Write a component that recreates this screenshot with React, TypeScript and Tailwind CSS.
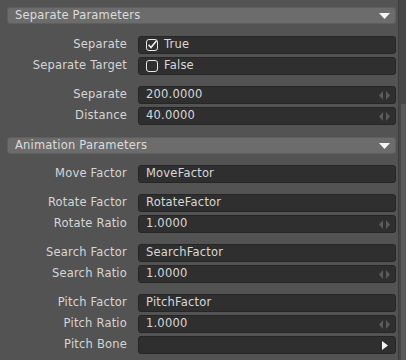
import React from 'react';

type Row =
  | { kind: 'check'; label: string; value: boolean }
  | { kind: 'number'; label: string; value: string }
  | { kind: 'text'; label: string; value: string }
  | { kind: 'object'; label: string };

const Header: React.FC<{ title: string }> = ({ title }) => (
  <div className="ml-[7px] mr-[2px] h-[17px] rounded-[3px] border border-[#5e5e5e] bg-[#6c6c6c] flex items-center justify-between pl-[7px] pr-[5px]">
    <span className="text-[#dcdcdc] leading-none">{title}</span>
    <svg width="11" height="6" viewBox="0 0 11 6">
      <polygon points="0,0 11,0 5.5,6" fill="#f4f4f4" />
    </svg>
  </div>
);

const Spin = () => (
  <svg width="11" height="9" viewBox="0 0 11 9">
    <polygon points="4,0 4,9 0,4.5" fill="#5b5b5b" />
    <polygon points="7,0 7,9 11,4.5" fill="#5b5b5b" />
  </svg>
);

const Field: React.FC<{ row: Row }> = ({ row }) => {
  return (
    <div className="flex items-center gap-[11px] pl-[7px] pr-[2px] h-[18px]">
      <div className="w-[120px] text-right text-[#d6d6d6] leading-none">{row.label}</div>
      <div className="flex-1 h-[18px] rounded-[3px] border border-[#262626] bg-[#2f2f2f] flex items-center justify-between pl-[7px] pr-[5px] text-[#d8d8d8] leading-none">
        {row.kind === 'check' && (
          <div className="flex items-center gap-[6px]">
            <svg width="12" height="12" viewBox="0 0 12 12">
              <rect x="0.5" y="0.5" width="11" height="11" rx="2.5" fill="none" stroke="#e8e8e8" strokeWidth="1" />
              {row.value && <path d="M2.5 5.8 L5 8.6 L10.5 1.8" fill="none" stroke="#f0f0f0" strokeWidth="1.6" />}
            </svg>
            <span>{row.value ? 'True' : 'False'}</span>
          </div>
        )}
        {row.kind === 'number' && (
          <>
            <span>{row.value}</span>
            <Spin />
          </>
        )}
        {row.kind === 'text' && <span>{row.value}</span>}
        {row.kind === 'object' && (
          <>
            <span />
            <svg width="6" height="9" viewBox="0 0 6 9" className="mr-[2px]">
              <polygon points="0,0 6,4.5 0,9" fill="#f4f4f4" />
            </svg>
          </>
        )}
      </div>
    </div>
  );
};

const Group: React.FC<{ rows: Row[] }> = ({ rows }) => (
  <div className="flex flex-col gap-[3px]">
    {rows.map((r) => (
      <Field key={r.label} row={r} />
    ))}
  </div>
);

export default function App() {
  return (
    <div className="w-[406px] h-[360px] bg-[#535353] flex overflow-hidden font-['DejaVu_Sans',sans-serif] text-[11.5px] tracking-[0.2px]">
      <div className="flex-1 flex flex-col pt-[7px]">
        <Header title="Separate Parameters" />
        <div className="mt-[12px] flex flex-col gap-[11px]">
          <Group
            rows={[
              { kind: 'check', label: 'Separate', value: true },
              { kind: 'check', label: 'Separate Target', value: false },
            ]}
          />
          <Group
            rows={[
              { kind: 'number', label: 'Separate', value: '200.0000' },
              { kind: 'number', label: 'Distance', value: '40.0000' },
            ]}
          />
        </div>
        <div className="mt-[12px]">
          <Header title="Animation Parameters" />
        </div>
        <div className="mt-[11px] flex flex-col gap-[11px]">
          <Group rows={[{ kind: 'text', label: 'Move Factor', value: 'MoveFactor' }]} />
          <Group
            rows={[
              { kind: 'text', label: 'Rotate Factor', value: 'RotateFactor' },
              { kind: 'number', label: 'Rotate Ratio', value: '1.0000' },
            ]}
          />
          <Group
            rows={[
              { kind: 'text', label: 'Search Factor', value: 'SearchFactor' },
              { kind: 'number', label: 'Search Ratio', value: '1.0000' },
            ]}
          />
          <Group
            rows={[
              { kind: 'text', label: 'Pitch Factor', value: 'PitchFactor' },
              { kind: 'number', label: 'Pitch Ratio', value: '1.0000' },
              { kind: 'object', label: 'Pitch Bone' },
            ]}
          />
        </div>
      </div>
      {/* scrollbar */}
      <div className="w-[8px] h-full border-l border-[#3c3c3c] bg-[#474747] flex flex-col">
        <div className="h-[104px]" />
        <div className="flex-1 ml-[2px] bg-[#5a5a5a]" />
      </div>
    </div>
  );
}
